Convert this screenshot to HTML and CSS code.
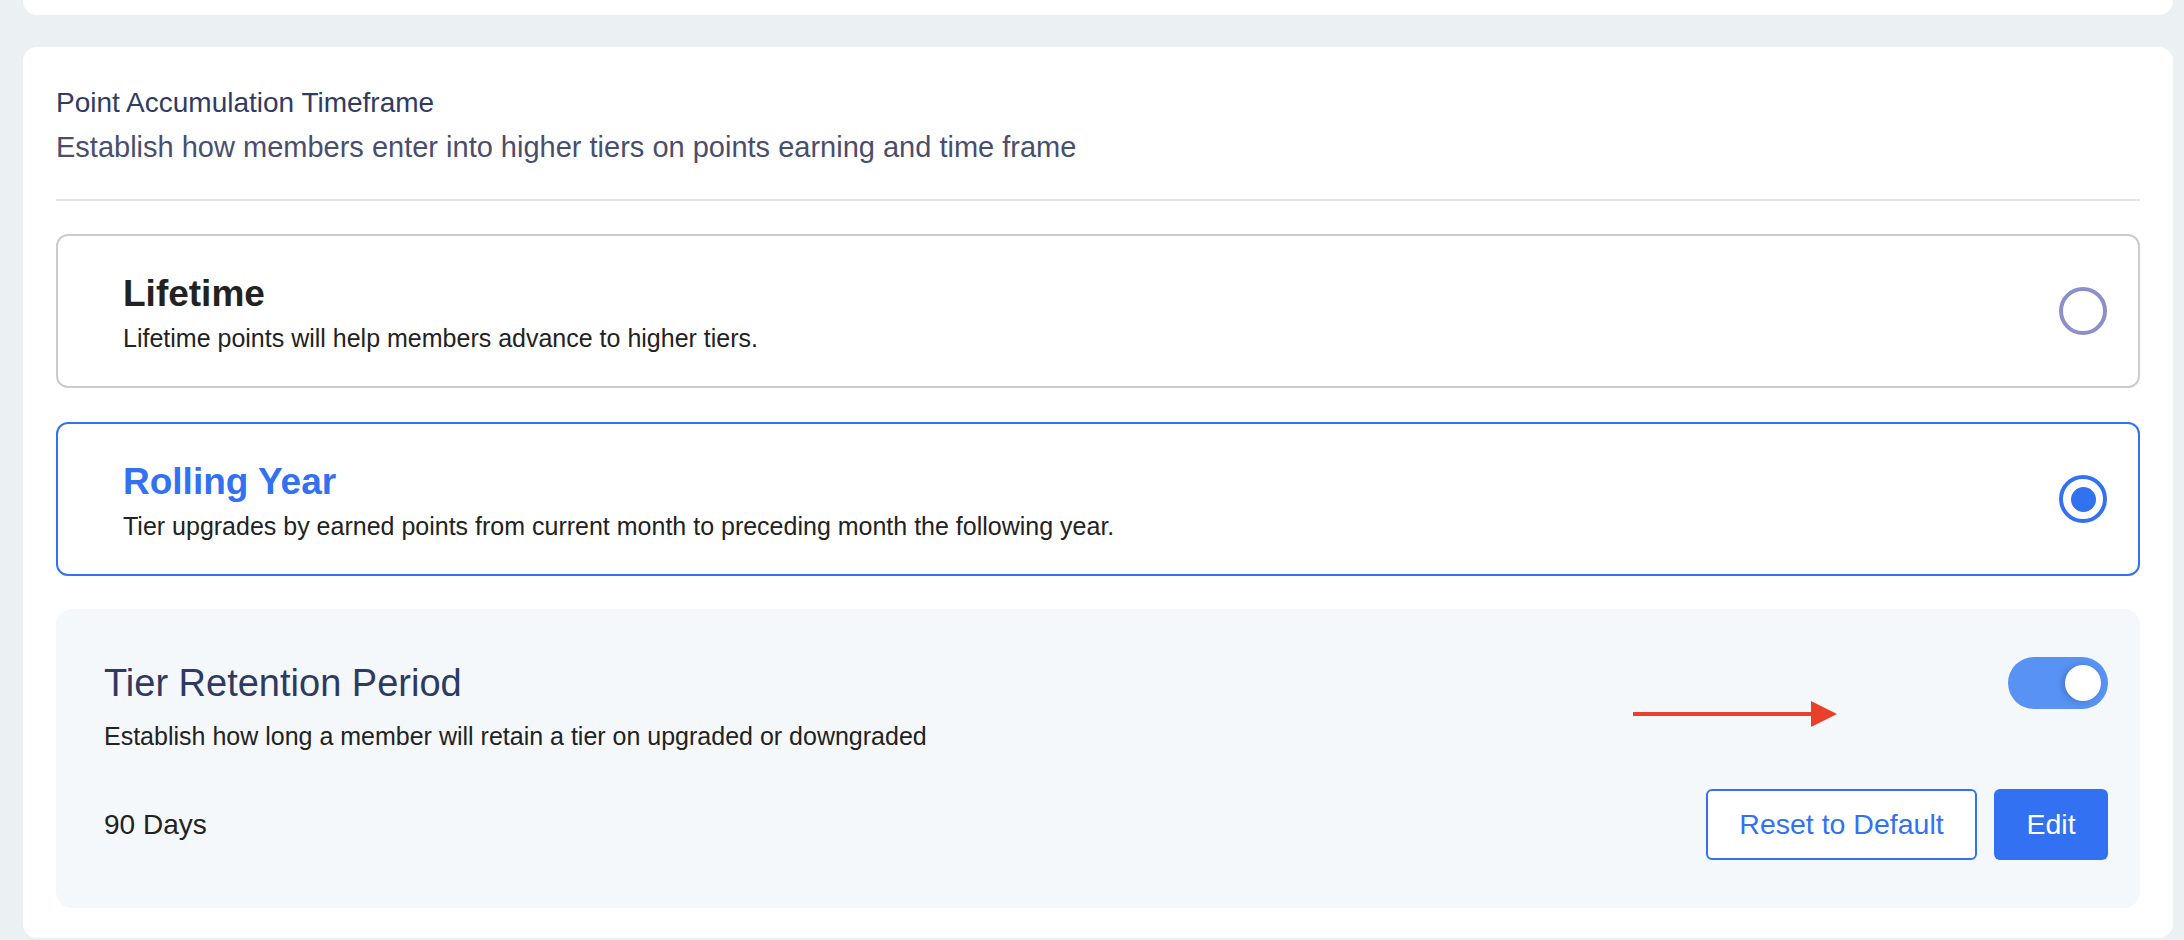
FILE: index.html
```html
<!DOCTYPE html>
<html lang="en">
<head>
<meta charset="utf-8">
<title>Point Accumulation Timeframe</title>
<link rel="stylesheet" href="styles.css">
</head>
<body>
<div class="top-card"></div>
<main class="card">
  <h2 class="section-title">Point Accumulation Timeframe</h2>
  <p class="section-sub">Establish how members enter into higher tiers on points earning and time frame</p>
  <hr class="divider">
  <div class="option">
    <div class="option-text">
      <div class="option-title">Lifetime</div>
      <div class="option-desc">Lifetime points will help members advance to higher tiers.</div>
    </div>
    <span class="radio"></span>
  </div>
  <div class="option option-selected">
    <div class="option-text">
      <div class="option-title">Rolling Year</div>
      <div class="option-desc">Tier upgrades by earned points from current month to preceding month the following year.</div>
    </div>
    <span class="radio radio-on"><span class="radio-dot"></span></span>
  </div>
  <section class="panel">
    <div class="panel-head">
      <div class="panel-title">Tier Retention Period</div>
      <span class="toggle"><span class="knob"></span></span>
    </div>
    <p class="panel-desc">Establish how long a member will retain a tier on upgraded or downgraded</p>
    <div class="panel-foot">
      <span class="days">90 Days</span>
      <div class="actions">
        <button class="btn btn-outline">Reset to Default</button>
        <button class="btn btn-solid">Edit</button>
      </div>
    </div>
    <svg class="arrow" width="206" height="26" viewBox="0 0 206 26">
      <rect x="0" y="11" width="182" height="4" fill="#e8402a"/>
      <polygon points="178,0 204,13 178,26" fill="#e8402a"/>
    </svg>
  </section>
</main>
</body>
</html>
```
FILE: styles.css
```css
* { box-sizing: border-box; }
html, body { margin: 0; padding: 0; }
body {
  background: #ebf0f3;
  padding: 0 11px 0 23px;
  font-family: "Liberation Sans", Arial, Helvetica, sans-serif;
  color: #222;
}
.top-card {
  height: 15px;
  background: #fff;
  border-radius: 0 0 14px 14px;
}
.card {
  margin-top: 32px;
  background: #fff;
  border-radius: 14px;
  padding: 39px 33px 30px;
}
.section-title {
  margin: 0;
  font-size: 28px;
  line-height: 34px;
  font-weight: 400;
  color: #303b64;
}
.section-sub {
  margin: 10px 0 0;
  font-size: 29px;
  line-height: 34px;
  color: #4a4e6d;
}
.divider {
  margin: 35px 0 0;
  border: 0;
  height: 2px;
  background: #e3e3e3;
}
.option {
  margin-top: 33px;
  display: flex;
  align-items: center;
  justify-content: space-between;
  border: 2px solid #cccccc;
  border-radius: 12px;
  padding: 0 31px 0 65px;
}
.option + .option { margin-top: 34px; }
.option-selected { border-color: #3271f2; }
.option-text { padding: 38px 0 33px; }
.option-title {
  font-size: 37px;
  line-height: 40px;
  font-weight: 700;
  color: #222;
}
.option-selected .option-title { color: #3271f2; }
.option-desc {
  margin-top: 9px;
  font-size: 25px;
  line-height: 30px;
  color: #222;
}
.radio {
  width: 48px;
  height: 48px;
  border-radius: 50%;
  border: 4px solid #8c8fc8;
  display: flex;
  align-items: center;
  justify-content: center;
}
.radio-on { border-color: #3271f2; }
.radio-dot {
  width: 25px;
  height: 25px;
  border-radius: 50%;
  background: #3271f2;
}
.panel {
  position: relative;
  margin-top: 33px;
  background: #f5f8fb;
  border-radius: 16px;
  padding: 48px 32px 48px 48px;
}
.panel-head {
  display: flex;
  align-items: center;
  justify-content: space-between;
  height: 52px;
}
.panel-title {
  font-size: 38px;
  line-height: 44px;
  color: #2e3a62;
}
.toggle {
  width: 100px;
  height: 52px;
  border-radius: 26px;
  background: #5893f4;
  display: flex;
  align-items: center;
  justify-content: flex-end;
  padding-right: 7px;
}
.knob {
  width: 36px;
  height: 36px;
  border-radius: 50%;
  background: #fff;
  box-shadow: -3px 1px 6px rgba(20, 40, 90, 0.25);
}
.panel-desc {
  margin: 12px 0 0;
  font-size: 25px;
  line-height: 30px;
  color: #222;
}
.panel-foot {
  margin-top: 38px;
  display: flex;
  align-items: center;
  justify-content: space-between;
}
.days {
  font-size: 28px;
  line-height: 34px;
  color: #222;
}
.actions {
  display: flex;
  gap: 17px;
}
.btn {
  height: 71px;
  border-radius: 6px;
  font-family: inherit;
  font-size: 28.5px;
  padding: 0;
  cursor: pointer;
}
.btn-outline {
  width: 271px;
  background: #fff;
  color: #3271f2;
  border: 2px solid #3271f2;
}
.btn-solid {
  width: 114px;
  background: #3271f2;
  color: #fff;
  border: 0;
}
.arrow {
  position: absolute;
  left: 1577px;
  top: 92px;
}
```
